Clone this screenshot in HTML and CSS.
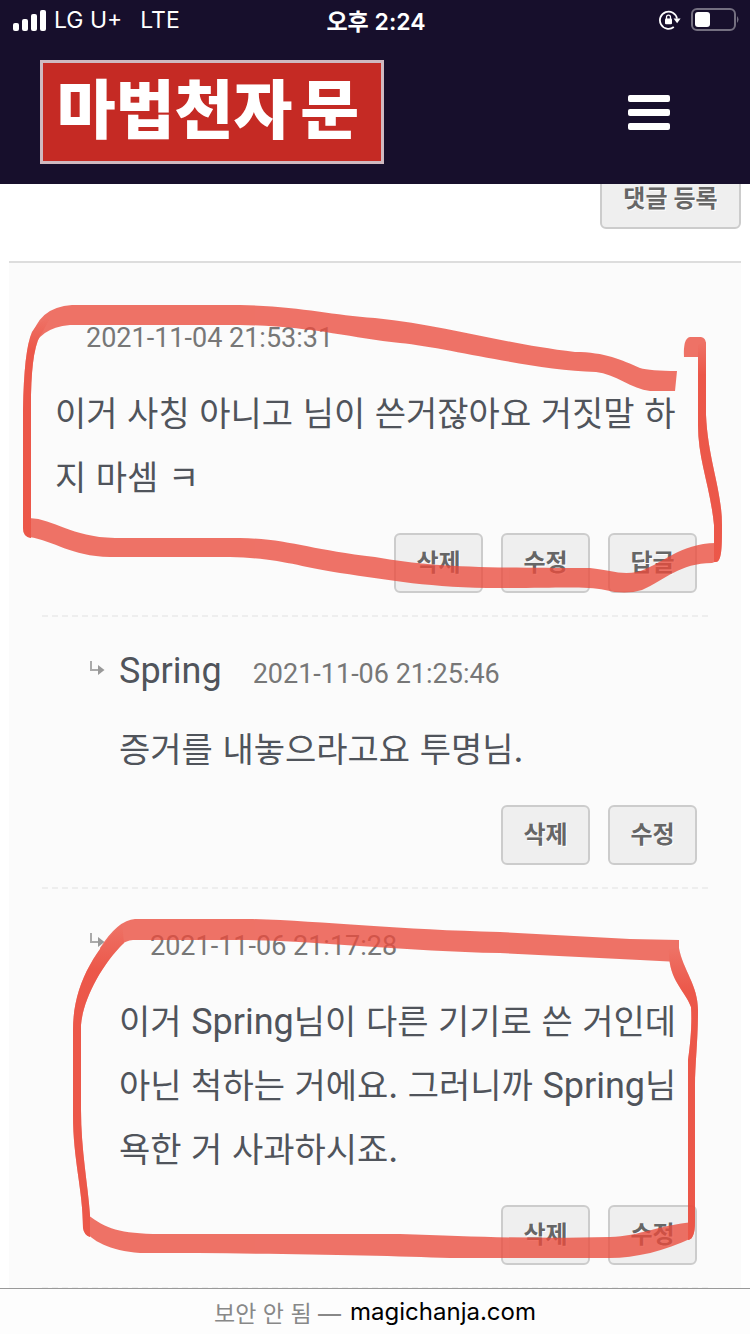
FILE: index.html
```html
<!DOCTYPE html>
<html lang="ko">
<head>
  <meta charset="UTF-8">
  <meta name="viewport" content="width=device-width, initial-scale=1.0">
  <title>마법천자문</title>
  <link rel="stylesheet" href="styles.css">
</head>
<body>
  <div class="status-bar">
    <div class="carrier">
      <svg width="33" height="21" viewBox="0 0 33 21" fill="#fff" aria-hidden="true">
        <rect x="0" y="13" width="6" height="8" rx="2"/>
        <rect x="9" y="9" width="6" height="12" rx="2"/>
        <rect x="18" y="4" width="6" height="17" rx="2"/>
        <rect x="27" y="0" width="6" height="21" rx="2"/>
      </svg>
      <span>LG U+</span>
      <span class="network">LTE</span>
    </div>
    <div class="clock">오후 2:24</div>
    <div class="indicators">
      <svg width="22" height="20" viewBox="0 0 22 20" aria-hidden="true">
        <path d="M18 8.6A8.6 8.6 0 1 0 14.8 17" fill="none" stroke="#fff" stroke-width="1.8"/>
        <path d="M14.6 8.6h7l-3.5 4.6z" fill="#fff"/>
        <rect x="6" y="8.6" width="7" height="5.6" rx="1" fill="#fff"/>
        <path d="M7.5 9V7.2a2 2 0 0 1 4 0V9" fill="none" stroke="#fff" stroke-width="1.3"/>
      </svg>
      <svg width="48" height="24" viewBox="0 0 48 24" aria-hidden="true">
        <rect x="1" y="1" width="43" height="21" rx="5" fill="none" stroke="#746f80" stroke-width="2"/>
        <rect x="4" y="4" width="15" height="15" rx="3" fill="#fff"/>
        <path d="M46 8q3 3.500 0 7z" fill="#746f80"/>
      </svg>
    </div>
  </div>

  <header class="site-header">
    <a class="logo" href="#">마법천자<span>문</span></a>
    <button class="menu-button" type="button" aria-label="메뉴">
      <span></span>
      <span></span>
      <span></span>
    </button>
  </header>

  <main>
    <div class="write-row">
      <button class="btn btn-submit" type="button">댓글 등록</button>
    </div>

    <section class="comments">
      <article class="comment">
        <div class="meta">
          <span class="name"></span>
          <time>2021-11-04 21:53:31</time>
        </div>
        <p>이거 사칭 아니고 님이 쓴거잖아요 거짓말 하지 마셈 ㅋ</p>
        <div class="actions">
          <button class="btn" type="button">삭제</button>
          <button class="btn" type="button">수정</button>
          <button class="btn" type="button">답글</button>
        </div>
      </article>

      <article class="comment reply">
        <div class="meta">
          <svg class="arrow" width="16" height="16" viewBox="0 0 16 16" aria-hidden="true">
            <path d="M2 0v9h8" fill="none" stroke="#aaa" stroke-width="2"/>
            <path d="M9 4l6.500 5L9 14z" fill="#999"/>
          </svg>
          <span class="name">Spring</span>
          <time>2021-11-06 21:25:46</time>
        </div>
        <p>증거를 내놓으라고요 투명님.</p>
        <div class="actions">
          <button class="btn" type="button">삭제</button>
          <button class="btn" type="button">수정</button>
        </div>
      </article>

      <article class="comment reply">
        <div class="meta">
          <svg class="arrow" width="16" height="16" viewBox="0 0 16 16" aria-hidden="true">
            <path d="M2 0v9h8" fill="none" stroke="#aaa" stroke-width="2"/>
            <path d="M9 4l6.500 5L9 14z" fill="#999"/>
          </svg>
          <span class="name"></span>
          <time>2021-11-06 21:17:28</time>
        </div>
        <p>이거 <span class="latin">Spring</span>님이 다른 기기로 쓴 거인데 아닌 척하는 거에요. 그러니까 <span class="latin">Spring</span>님 욕한 거 사과하시죠.</p>
        <div class="actions">
          <button class="btn" type="button">삭제</button>
          <button class="btn" type="button">수정</button>
        </div>
      </article>

      <!-- red marker lines around the two comments -->
      <svg class="marker" viewBox="9 263 732 1026" preserveAspectRatio="none" aria-hidden="true">
        <defs>
          <linearGradient id="fade" x1="0" y1="0" x2="0" y2="1">
            <stop offset="0" stop-color="#eb4c3d" stop-opacity="0"/>
            <stop offset="0.15" stop-color="#eb4c3d"/>
          </linearGradient>
          <g id="thin">
            <path d="M32 332Q24 350 23 410V528Q23 537 31 538V395Q32 345 42 333L50 318Q37 322 32 332z"/>
            <path d="M698 345L706 342V415C708 460 722 490 722 525C722 545 722 562 716 562H714V525C710 485 698 460 698 425z"/>
            <path d="M122 924C95 950 73 985 73 1030V1115C73 1160 83 1190 83 1228Q84 1235 90 1237V1215C88 1185 81 1150 81 1110V1025C83 1000 101 965 124 943z"/>
            <path d="M669 950L679 948C683 970 698 985 698 1010C698 1040 695 1065 695 1085V1222Q695 1239 688 1240V1060C691 1040 692 1020 691 1007C685 990 668 980 669 950z"/>
          </g>
        </defs>
        <g class="stroke">
          <path d="M31 340Q38 307 72 305H240C300 306 330 315 375 318C450 326 500 343 575 352C605 352 622 360 640 368Q650 371 677 371L675 391H650C632 389 615 374 596 372C530 370 450 348 400 343C350 338 310 326 240 325H70Q38 328 32 352z"/>
          <path d="M29 518C55 519 70 537 115 538H240C290 539 310 550 375 557C430 567 480 568 590 568C610 570 620 575 637 572C660 566 680 543 716 543L720 554Q718 562 712 563C680 563 665 580 642 590Q625 595 605 590C585 586 560 588 500 588C430 588 390 580 340 573C300 567 280 558 230 557H110C70 556 55 541 29 537z"/>
          <path d="M684 357Q683 338 690 337H701Q706 338 706 344V357z"/>
          <path d="M100 948Q118 920 135 919H250C320 921 400 930 500 932L630 939L679 940V962L640 960L500 953C400 951 310 940 240 940H133Q119 941 105 962z"/>
          <path d="M88 1215C105 1228 120 1234 160 1234H400C480 1237 540 1239 610 1237C640 1236 660 1225 693 1222L692 1238C665 1251 635 1258 610 1258H450C380 1255 250 1253 140 1253C110 1251 90 1240 85 1230z"/>
          <use href="#thin"/>
        </g>
        <use class="pressed" href="#thin"/>
      </svg>
    </section>
  </main>

  <footer class="address-bar">
    <span class="insecure">보안 안 됨 —</span>
    <span>magichanja.com</span>
  </footer>
</body>
</html>
```
FILE: styles.css
```css
* {
  box-sizing: border-box;
}
body {
  margin: 0;
  height: 100vh;
  display: flex;
  flex-direction: column;
  overflow: hidden;
  background: #fff;
  color: #50545b;
  font-family: Roboto, "Noto Sans CJK KR", sans-serif;
}
button {
  font-family: inherit;
}

/* status bar */
.status-bar {
  flex: none;
  display: grid;
  grid-template-columns: 1fr auto 1fr;
  align-items: center;
  height: 40px;
  padding: 0 11px 0 13px;
  background: #170f2c;
  color: #fff;
  font-family: Inter, "Noto Sans CJK KR", sans-serif;
  font-size: 23px;
}
.carrier, .indicators {
  display: flex;
  align-items: center;
  gap: 8px;
}
.network {
  margin-left: 10px;
}
.clock {
  font-weight: 600;
}
.indicators {
  justify-content: flex-end;
  gap: 10px;
}

/* header */
.site-header {
  flex: none;
  display: flex;
  align-items: center;
  justify-content: space-between;
  height: 144px;
  padding: 0 80px 0 40px;
  background: #170f2c;
}
.logo {
  display: flex;
  align-items: center;
  justify-content: center;
  gap: 8px;
  width: 344px;
  height: 104px;
  padding-right: 8px;
  border: 3px solid #cfb9c0;
  background: #c52a24;
  color: #fff;
  font-size: 64px;
  font-weight: 900;
  line-height: 1;
  text-decoration: none;
  white-space: nowrap;
}
.menu-button {
  display: flex;
  flex-direction: column;
  gap: 7px;
  padding: 0;
  border: 0;
  background: none;
}
.menu-button span {
  width: 42px;
  height: 7px;
  border-radius: 2px;
  background: #fff;
}

/* comment list */
main {
  flex: 1;
  min-height: 0;
  overflow: hidden;
  padding: 0 9px;
}
.write-row {
  display: flex;
  justify-content: flex-end;
  margin: -15px 0 32px;
}
.btn {
  min-width: 89px;
  height: 60px;
  padding: 0 20px 6px;
  border: 2px solid #ccc;
  border-radius: 6px;
  background: #efefef;
  color: #666;
  font-size: 24px;
  font-weight: 700;
  text-shadow: 1px 1px 0 #fff;
}
.btn-submit {
  min-width: 141px;
}
.comments {
  position: relative;
  padding: 18px 33px 0;
  border-top: 2px solid #ddd;
  background: #fbfbfb;
}
.comment {
  padding: 22px 11px 22px 13px;
  border-bottom: 2px dashed #eee;
}
.reply {
  padding-left: 77px;
}
.meta {
  position: relative;
  display: flex;
  align-items: baseline;
  gap: 31px;
  height: 64px;
  line-height: 64px;
}
.arrow {
  position: absolute;
  left: -30px;
  top: 22px;
}
.name {
  font-size: 36px;
}
/* keeps the baseline when the writer left the name empty */
.name::before {
  content: "\200b";
}
time {
  color: #777;
  font-size: 27px;
}
.comment p {
  margin: 15px 0 23px;
  font-family: Inter, "Noto Sans CJK KR", sans-serif;
  font-size: 34px;
  line-height: 64px;
}
.latin {
  font-family: Roboto, sans-serif;
  font-size: 36px;
  line-height: 1;
}
.actions {
  display: flex;
  justify-content: flex-end;
  gap: 18px;
}
.marker {
  position: absolute;
  top: 0;
  left: 0;
  width: 100%;
  height: 1026px;
  pointer-events: none;
}
.stroke {
  fill: #eb4c3d;
  opacity: 0.78;
}
.pressed {
  fill: url(#fade);
  opacity: 0.7;
}

/* browser bar */
.address-bar {
  flex: none;
  display: flex;
  align-items: center;
  justify-content: center;
  gap: 9px;
  height: 46px;
  border-top: 1px solid #999;
  background: #fdfdfd;
  color: #000;
  font-family: Inter, "Noto Sans CJK KR", sans-serif;
  font-size: 24px;
}
.insecure {
  color: #888;
  font-size: 23px;
}
```
